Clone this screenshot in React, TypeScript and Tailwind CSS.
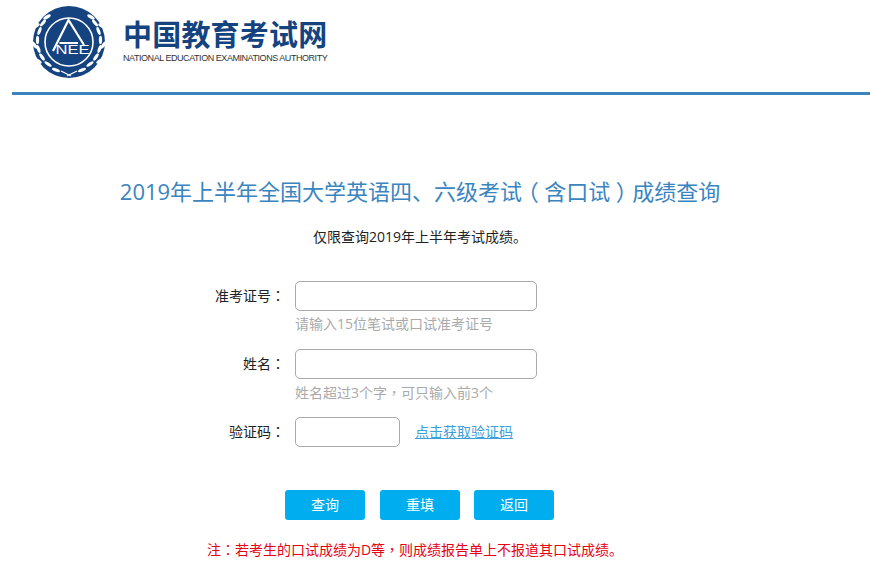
const FONT = "font-['Open_Sans','Noto_Sans_CJK_SC',sans-serif]";

function Leaf({ x, y, r }: { x: number; y: number; r: number }) {
  return <ellipse cx={x} cy={y} rx="1.6" ry="4.2" fill="#fff" transform={`rotate(${r} ${x} ${y})`} />;
}

function Logo() {
  const left = [
    [12, 19, 40], [8.5, 27, 20], [6.5, 36, 0], [7.5, 45, -18], [11, 53, -35], [17, 60, -55], [25, 66, -70],
    [16, 13, 60], [5, 22, 60], [3.5, 41, -35], [7, 57, -60],
  ];
  return (
    <svg viewBox="0 0 76 76" className="h-[76px] w-[76px] shrink-0">
      <circle cx="38" cy="38" r="36" fill="#15437f" />
      <circle cx="38" cy="38" r="24" fill="none" stroke="#fff" strokeWidth="1.6" />
      {left.map(([x, y, r], i) => (
        <g key={i}>
          <Leaf x={x} y={y} r={r} />
          <Leaf x={76 - x} y={y} r={-r} />
        </g>
      ))}
      <path d="M30 67 L40 72 M46 67 L36 72" fill="none" stroke="#fff" strokeWidth="1.3" />
      <path d="M22 47 L37.5 16 L53 41 M28.5 39 L47 39" fill="none" stroke="#fff" strokeWidth="2.2" />
      <text x="41.5" y="50" textAnchor="middle" fill="#fff" fontSize="12" fontFamily="Liberation Sans, sans-serif" textLength="34" lengthAdjust="spacingAndGlyphs">
        NEE
      </text>
    </svg>
  );
}

// the reference centres this punctuation in its cell, the SC face doesn't
function Mark({ children }: { children: string }) {
  return <span className="font-['Noto_Sans_CJK_TC']">{children}</span>;
}

function Paren({ children }: { children: string }) {
  return <span className="mx-[5.5px] inline-block [font-feature-settings:'halt']">{children}</span>;
}

function Row({ label, hint, children }: { label: string; hint?: React.ReactNode; children: React.ReactNode }) {
  return (
    <div className="flex items-start">
      <div className="h-[30px] w-[295px] pr-[10px] text-right text-[14px] leading-[28px] text-[#222]">
        {label}
        <Mark>：</Mark>
      </div>
      <div>
        {children}
        {hint ? <p className="mt-[3px] h-[20px] text-[14px] leading-[20px] text-[#aaa]">{hint}</p> : null}
      </div>
    </div>
  );
}

const inputCls = "block h-[30px] rounded-[5px] border border-[#aaa] bg-white outline-none";
const btnCls = "h-[30px] w-[80px] rounded-[3px] bg-[#00aeef] pb-[1px] text-[14px] text-white";

export default function App() {
  return (
    <div className={`h-[580px] w-[870px] overflow-hidden bg-white pl-[12px] ${FONT}`}>
      <header className="flex h-[95px] items-start border-b-[3px] border-[#3a84c0] pl-[19px] pt-[4px]">
        <Logo />
        <div className="ml-[16px] mt-[14px]">
          <div className="text-[29px] font-bold leading-[34px] tracking-[0.2px] text-[#15437f]">中国教育考试网</div>
          <div className="font-['Liberation_Sans'] text-[9px] leading-[12px] tracking-[-0.45px] text-[#333]">NATIONAL EDUCATION EXAMINATIONS AUTHORITY</div>
        </div>
      </header>

      <main className="w-[816px]">
        <h1 className="mt-[81px] text-center text-[22px] leading-[30px] text-[#3a84c0]">
          2019年上半年全国大学英语四、六级考试<Paren>（</Paren>含口试<Paren>）</Paren>成绩查询
        </h1>
        <p className="mt-[21px] text-center text-[14px] leading-[20px] text-[#222]">仅限查询2019年上半年考试成绩。</p>

        <form className="mt-[34px] -ml-[12px] flex w-[840px] flex-col">
          <Row label="准考证号" hint="请输入15位笔试或口试准考证号">
            <input className={`${inputCls} w-[242px]`} />
          </Row>
          <div className="mt-[15px]">
            <Row label="姓名" hint={<>姓名超过3个字<Mark>，</Mark>可只输入前3个</>}>
              <input className={`${inputCls} w-[242px]`} />
            </Row>
          </div>
          <div className="mt-[15px]">
            <Row label="验证码">
              <div className="flex items-center">
                <input className={`${inputCls} w-[105px]`} />
                <a className="ml-[15px] pb-[2px] text-[14px] text-[#3aa0db] underline">点击获取验证码</a>
              </div>
            </Row>
          </div>
        </form>

        <div className="ml-[273px] mt-[43px] flex">
          <button className={btnCls}>查询</button>
          <button className={`${btnCls} ml-[15px]`}>重填</button>
          <button className={`${btnCls} ml-[14px]`}>返回</button>
        </div>
        <p className="mt-[19px] pr-[10px] text-center text-[14px] leading-[20px] text-[#e60012]">
          注<Mark>：</Mark>若考生的口试成绩为D等<Mark>，</Mark>则成绩报告单上不报道其口试成绩。
        </p>
      </main>
    </div>
  );
}
